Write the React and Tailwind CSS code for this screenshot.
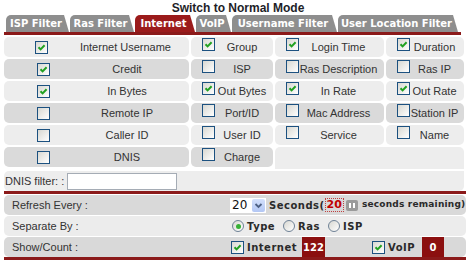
import React from "react";

const rows = [
  [["Internet Username", true], ["Group", true], ["Login Time", true], ["Duration", true]],
  [["Credit", true], ["ISP", false], ["Ras Description", false], ["Ras IP", false]],
  [["In Bytes", true], ["Out Bytes", true], ["In Rate", true], ["Out Rate", true]],
  [["Remote IP", false], ["Port/ID", false], ["Mac Address", false], ["Station IP", false]],
  [["Caller ID", false], ["User ID", false], ["Service", false], ["Name", false]],
  [["DNIS", false], ["Charge", false]],
];

const cols = [
  { box: "w-[79px] flex justify-center", label: "flex-1 text-center pr-[18px]" },
  { box: "pl-[11px]", label: "flex-1 text-center pr-[4px]" },
  { box: "pl-[11px]", label: "flex-1 text-center pr-[6px]" },
  { box: "pl-[11px]", label: "flex-1 text-center pr-[5px]" },
];

const tabs = [
  ["ISP Filter", "w-[63px]"],
  ["Ras Filter", "w-[64px]"],
  ["Internet", "w-[60px]"],
  ["VoIP", "w-[35px]"],
  ["Username Filter", "w-[105px]"],
  ["User Location Filter", "w-[120px]"],
];

function Check({ checked }) {
  return (
    <span className="relative inline-block h-[13px] w-[13px] shrink-0 border border-[#1c5180] bg-gradient-to-br from-[#d8d8d2] to-white">
      {checked && (
        <svg viewBox="0 0 11 11" className="absolute inset-0 h-[11px] w-[11px]">
          <path d="M2.5 5.2 L4.6 7.4 L8.6 3.2" fill="none" stroke="#21a121" strokeWidth="2" />
        </svg>
      )}
    </span>
  );
}

function Radio({ checked }) {
  return (
    <span className="flex h-[12px] w-[12px] shrink-0 items-center justify-center rounded-full border border-[#6f8296] bg-gradient-to-br from-[#d8d8d2] to-white">
      {checked && <span className="h-[5px] w-[5px] rounded-full bg-[#36b136]" />}
    </span>
  );
}

export default function App() {
  return (
    <div className="h-[261px] w-[472px] bg-white pl-[4px] font-['Liberation_Sans',Arial,sans-serif] text-[11px] text-[#333]">
      {/* Title */}
      <div className="h-[15px] pt-[1px] text-center text-[12px] font-bold leading-[14px] text-[#1e1e28]">
        Switch to Normal Mode
      </div>

      {/* Tabs */}
      <div className="flex h-[17px] gap-[1px] pl-[2px] font-['DejaVu_Sans',sans-serif] text-[10px] font-bold text-white">
        {tabs.map(([t, w]) => (
          <div
            key={t}
            className={`${w} flex items-center justify-center pr-[3px] rounded-tl-[5px] [clip-path:polygon(0_0,calc(100%_-_5px)_0,100%_100%,0_100%)] ${
              t === "Internet" ? "bg-[#9b1b1b]" : "bg-[#8e8e8e]"
            }`}
          >
            {t}
          </div>
        ))}
      </div>
      <div className="h-[3px] w-[457px] bg-[#8b1a1a]" />

      {/* Columns grid */}
      <div className="mt-[2px] grid w-[460px] grid-cols-[185px_82px_109px_78px] gap-x-[2px] gap-y-[2px]">
        {rows.map((row, ri) =>
          row.map(([label, checked], ci) => (
            <div
              key={label}
              className={`flex h-[20px] items-center rounded-[5px] ${ri % 2 === 0 ? "bg-[#ededed]" : "bg-[#dadada]"}`}
            >
              <div className={cols[ci].box}>
                <Check checked={checked} />
              </div>
              <div className={`${cols[ci].label} whitespace-nowrap`}>{label}</div>
            </div>
          ))
        )}
        <div className="col-span-2 h-[22px] rounded-t-[5px] bg-[#ededed]" />
        <div className="col-span-4 flex h-[20px] items-center rounded-[5px] rounded-tr-none bg-[#ededed] pl-[1px]">
          <span>DNIS filter: :</span>
          <input className="ml-[3px] h-[17px] w-[110px] border border-[#a5acb5] bg-white outline-none" />
        </div>
      </div>

      <div className="h-[3px] w-[462px] bg-[#8b1a1a]" />

      {/* Options */}
      <div className="mt-[1px] flex w-[462px] flex-col gap-[1px]">
        <div className="flex h-[20px] items-center rounded-[5px] bg-[#d9d9d9]">
          <div className="w-[224px] pl-[8px]">Refresh Every :</div>
          <div className="flex items-center pl-[2px]">
            <div className="flex h-[15px] w-[36px] items-center justify-between bg-white pl-[2px] pr-[1px] font-['DejaVu_Sans',sans-serif] text-[12px] text-[#111]">
              <span>20</span>
              <span className="flex h-[13px] w-[13px] items-center justify-center rounded-[2px] bg-gradient-to-b from-[#d3e0fc] to-[#b3c7f4]">
                <svg viewBox="0 0 9 9" className="h-[9px] w-[9px]">
                  <path d="M1.5 3 L4.5 6 L7.5 3" fill="none" stroke="#4d6185" strokeWidth="1.8" />
                </svg>
              </span>
            </div>
            <span className="ml-[3px] font-['DejaVu_Sans',sans-serif] text-[10px] font-bold tracking-[0.5px] text-[#2a2a2a]">
              Seconds(
            </span>
            <span className="border border-dotted border-[#c04040] px-[1px] font-['DejaVu_Sans',sans-serif] text-[11px] font-bold leading-[12px] text-[#c00000]">
              20
            </span>
            <span className="ml-[2px] flex h-[11px] w-[12px] items-center justify-center gap-[2px] rounded-[2px] bg-[#9a9a9a]">
              <span className="h-[5px] w-[2px] bg-white" />
              <span className="h-[5px] w-[2px] bg-white" />
            </span>
            <span className="ml-[4px] font-['DejaVu_Sans',sans-serif] text-[9px] font-bold tracking-[0.2px] text-[#2a2a2a]">
              seconds remaining)
            </span>
          </div>
        </div>

        <div className="flex h-[20px] items-center rounded-[5px] bg-[#ececec]">
          <div className="w-[224px] pl-[8px]">Separate By :</div>
          <div className="flex items-center gap-[3px] pl-[4px] font-['DejaVu_Sans',sans-serif] text-[10px] font-bold tracking-[0.5px] text-[#2a2a2a]">
            <Radio checked />
            <span>Type</span>
            <span className="ml-[2px]" />
            <Radio />
            <span>Ras</span>
            <span className="ml-[2px]" />
            <Radio />
            <span>ISP</span>
          </div>
        </div>

        <div className="flex h-[20px] items-center rounded-[5px] bg-[#d9d9d9]">
          <div className="w-[224px] pl-[8px]">Show/Count :</div>
          <div className="flex h-full items-center pl-[3px] font-['DejaVu_Sans',sans-serif] text-[10px] font-bold tracking-[0.5px] text-[#2a2a2a]">
            <Check checked />
            <span className="ml-[3px]">Internet</span>
            <span className="ml-[5px] flex h-full w-[23px] items-center justify-center bg-[#8b0f0f] tracking-normal text-white">122</span>
            <span className="ml-[47px]" />
            <Check checked />
            <span className="ml-[3px]">VoIP</span>
            <span className="ml-[7px] flex h-full w-[22px] items-center justify-center bg-[#8b0f0f] text-white">0</span>
          </div>
        </div>
      </div>
      <div className="h-[3px] w-[462px] bg-[#8b1a1a]" />
    </div>
  );
}
